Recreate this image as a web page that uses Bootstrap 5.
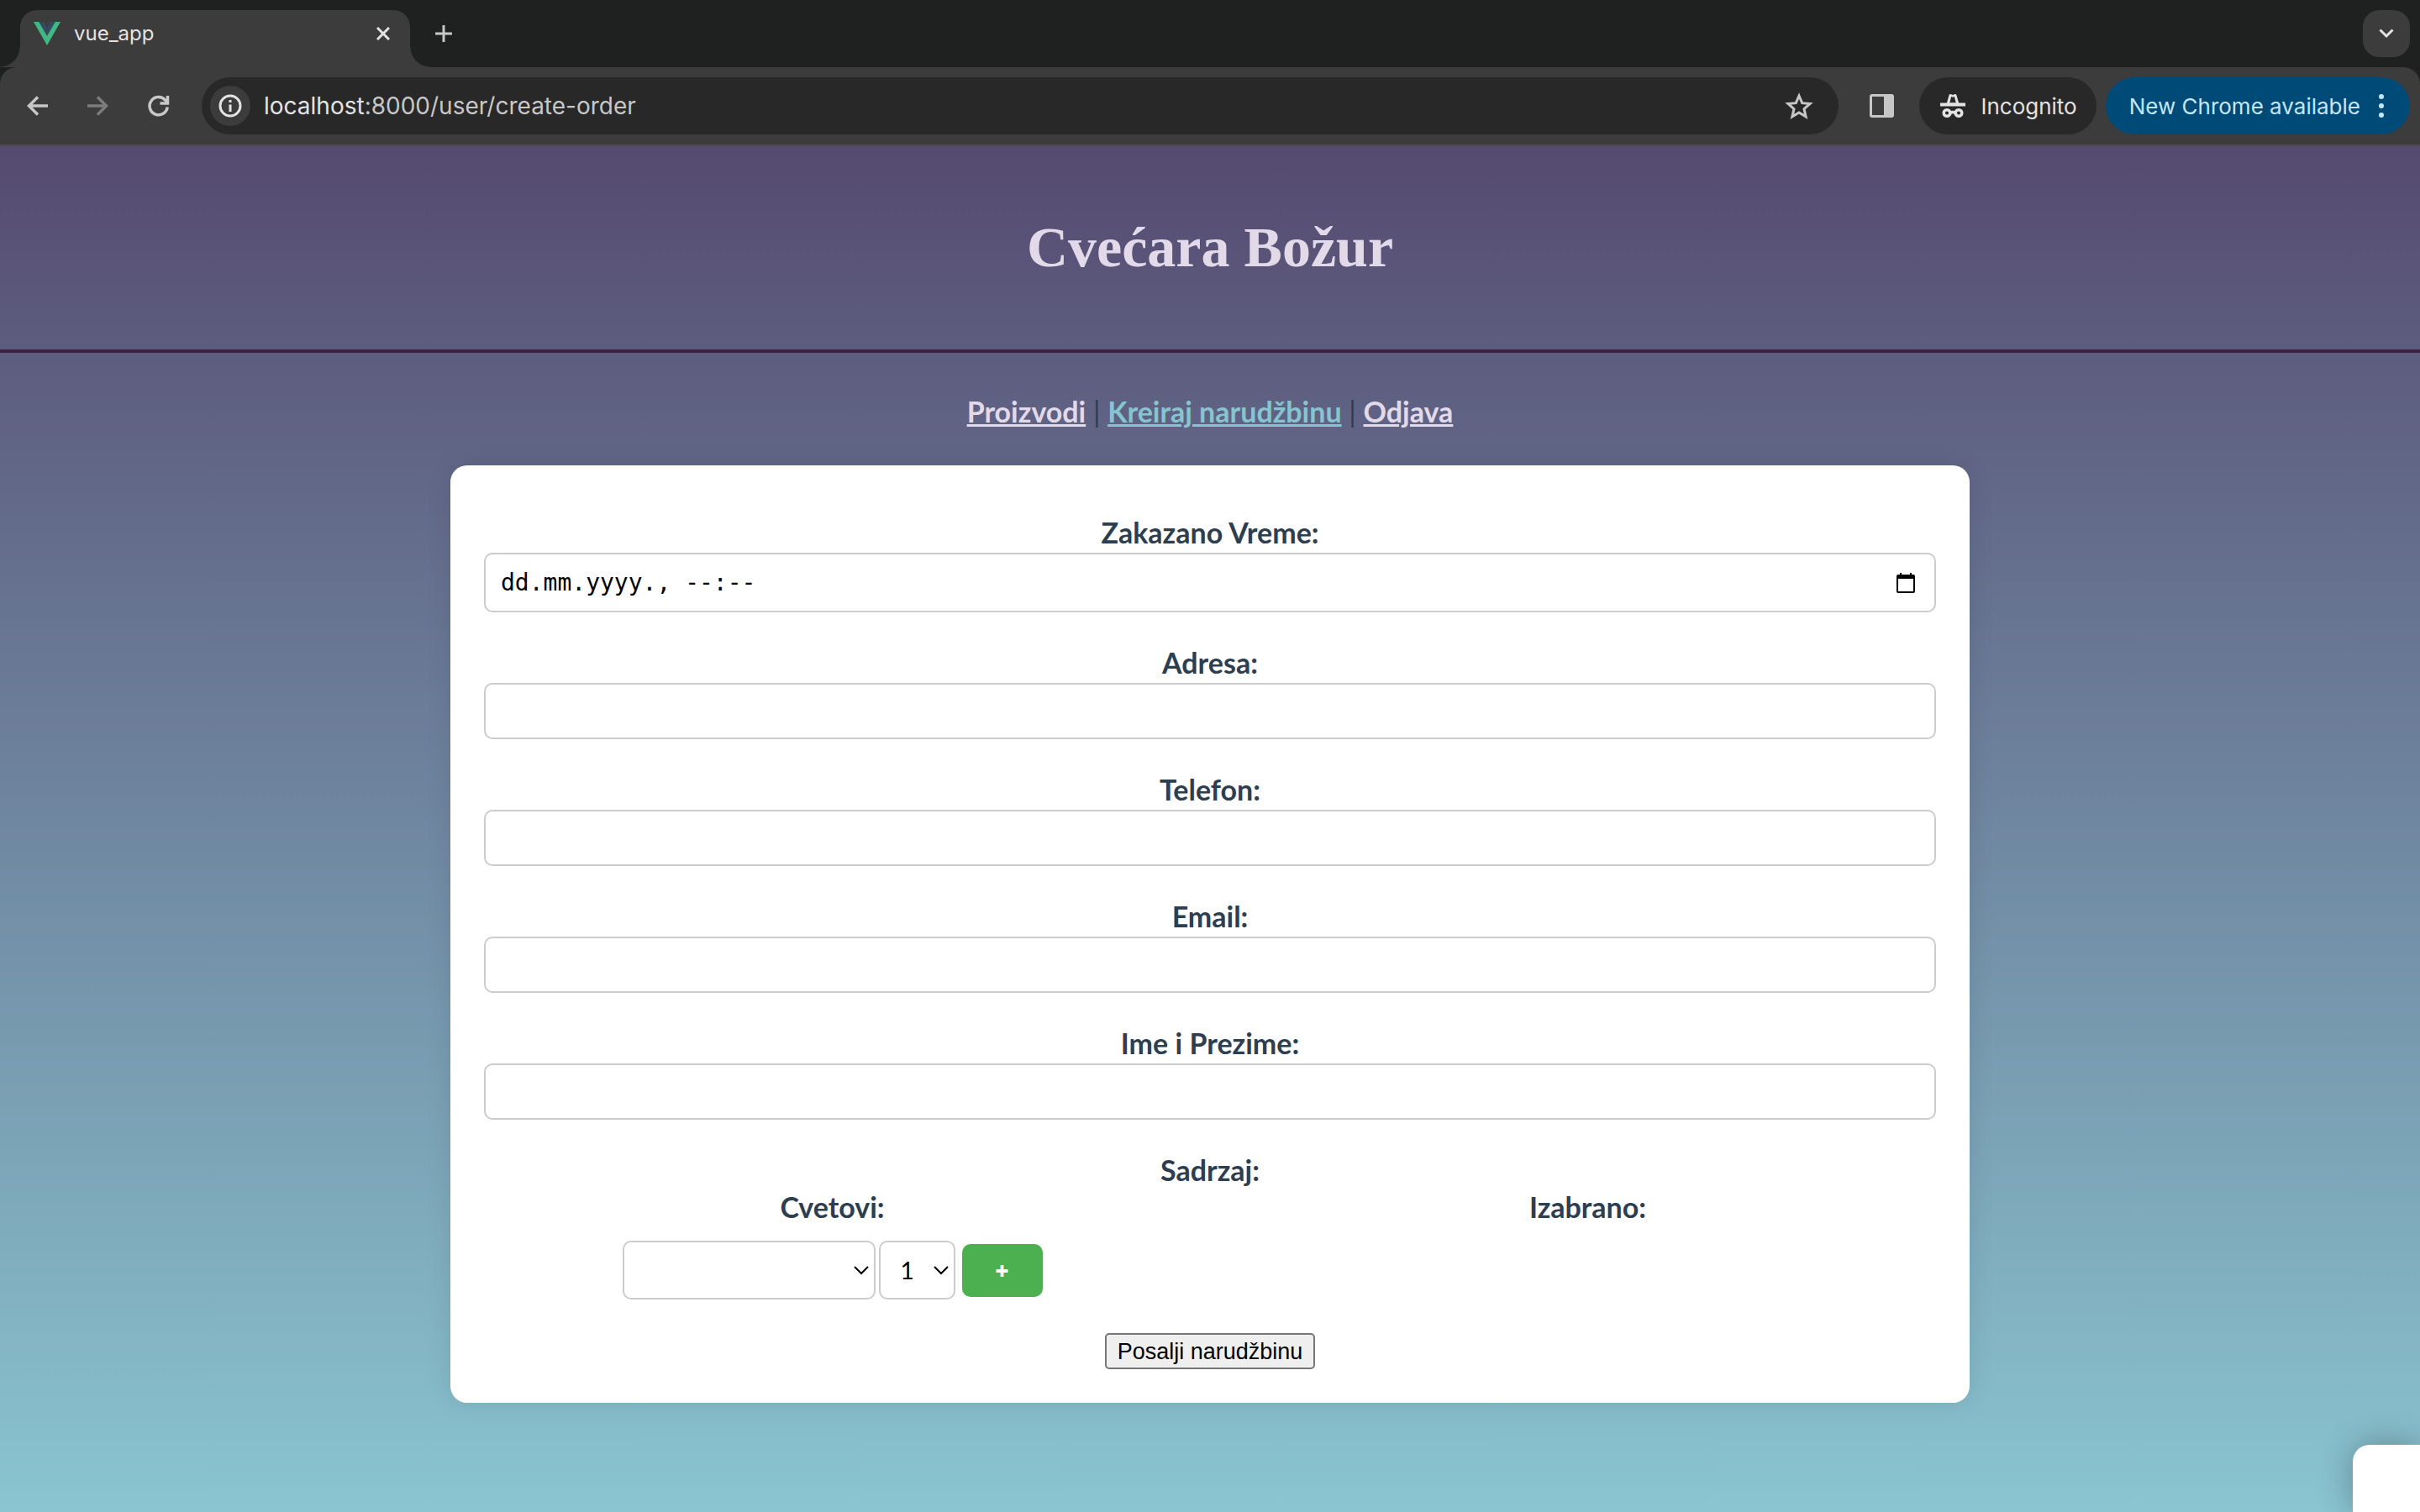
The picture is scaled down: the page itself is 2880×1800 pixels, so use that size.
<!DOCTYPE html>
<html lang="sr-Latn">
<head>
<meta charset="utf-8">
<meta name="viewport" content="width=device-width, initial-scale=1">
<title>vue_app</title>
<link href="https://cdn.jsdelivr.net/npm/bootstrap@5.3.0/dist/css/bootstrap.min.css" rel="stylesheet">
<style>
  body { background: #1f2120; font-family: Lato, "Open Sans", sans-serif; }
  button { border: 0; background: none; padding: 0; color: inherit; }
  svg { display: block; flex: none; }

  /* browser frame */
  .chrome-ui { font-family: Inter, Roboto, sans-serif; color: #e3e3e3; }
  .tab-strip { height: 80px; padding: 12px 12px 0 24px; }
  .tab-item { position: relative; width: 464px; height: 68px; padding: 0 24px 12px 16px; gap: 16px; background: #3c3c3c; border-radius: 20px 20px 0 0; font-size: 24px; }
  .tab-item::before, .tab-item::after { content: ""; position: absolute; bottom: 0; width: 24px; height: 24px; }
  .tab-item::before { right: 100%; background: radial-gradient(circle at 0 0, transparent 23px, #3c3c3c 24px); }
  .tab-item::after { left: 100%; background: radial-gradient(circle at 100% 0, transparent 23px, #3c3c3c 24px); }
  .new-tab { margin: 0 0 12px 30px; color: #c7c7c7; }
  .tab-menu { width: 56px; height: 56px; border-radius: 20px; background: #3c3c3c; }
  .tool-bar { height: 94px; padding: 12px 12px 12px 32px; background: #3c3c3c; border-bottom: 2px solid #4a4a4a; border-radius: 20px 20px 0 0; color: #c7c7c7; }
  .nav-icons { gap: 46px; margin-right: 38px; }
  .address { height: 68px; border-radius: 34px; background: #282828; padding: 0 30px 0 10px; }
  .site-info { width: 48px; height: 48px; border-radius: 24px; background: #3c3c3c; color: #e3e3e3; }
  .address-text { font-size: 28px; margin-left: 16px; color: #c7c7c7; }
  .address-text span { color: #e3e3e3; }
  .side-panel { margin: 0 30px 0 37px; }
  .pill { height: 68px; border-radius: 34px; font-size: 26px; white-space: nowrap; }
  .pill-incognito { padding: 0 23px 0 25px; gap: 18px; background: #282828; color: #e3e3e3; margin-right: 11px; }
  .pill-update { padding: 0 31px 0 28px; gap: 22px; background: #004a77; color: #c2e7ff; }

  /* shop page */
  .shop { position: relative; overflow: hidden; background: linear-gradient(#554a70, #8ac5d1); color: #2c3e50; font-size: 34px; line-height: 44px; text-align: center; }
  .shop-header { border-bottom: 4px solid #3a2340; padding: 72px 0 74px; }
  .shop-title { margin: 0; font-family: "Liberation Serif", serif; font-weight: 700; font-size: 68px; line-height: 96px; color: #e2d9e9; }
  .shop-nav { padding: 48px 0 42px; }
  .shop-nav a { color: #e2d9e9; font-weight: 700; text-decoration-thickness: 3px; }
  .shop-nav a.current { color: #86c5d0; }
  .order-card { width: 100%; max-width: 1808px; margin: 0 auto; padding: 58px 40px 40px; background: #fff; border-radius: 20px; box-shadow: 0 0 30px rgba(0,0,0,.1); }
  .order-card label, .group-title { display: block; font-weight: 700; }
  .field { margin-bottom: 38px; }
  .field label { margin-bottom: 2px; }
  .box { border: 2px solid #ccc; border-radius: 10px; background-color: #fff; color: #000; }
  .field .box { display: flex; align-items: center; width: 100%; height: 67px; padding: 0 18px; }
  .field .box.date-box { height: 71px; padding-right: 23px; }
  .date-box input { flex: 1; border: 0; outline: 0; padding: 0; font-family: "DejaVu Sans Mono", monospace; font-size: 28px; line-height: 40px; color: #000; }
  .pickers { display: grid; grid-template-columns: 1fr 1fr; gap: 70px; margin-bottom: 40px; }
  .picker-row { margin-top: 18px; }
  .picker-row select { appearance: none; height: 70px; padding: 0 24px; font-family: Lato, sans-serif; font-size: 28px; }
  .select-wrap { position: relative; }
  .select-wrap svg { position: absolute; right: 8px; top: 30px; pointer-events: none; }
  .flower { width: 301px; }
  .amount { width: 91px; }
  .add-btn { width: 96px; height: 63px; margin-left: 4px; border-radius: 10px; background: #4caf50; color: #fff; font-family: "Open Sans", sans-serif; font-weight: 800; font-size: 28px; line-height: 40px; }
  .send-btn { height: 43px; padding: 0 13px; border: 2px solid #767676; border-radius: 5px; background: #efefef; color: #000; font-family: "Liberation Sans", sans-serif; font-size: 27px; line-height: 36px; }
  .corner-panel { position: absolute; right: 0; bottom: 0; width: 80px; height: 80px; background: #fff; border-radius: 20px 0 0 0; box-shadow: 0 0 40px rgba(0,0,0,.3); }
</style>
</head>
<body>
<div class="d-flex flex-column min-vh-100">
  <header class="chrome-ui">
    <div class="tab-strip d-flex align-items-start">
      <div class="tab-item d-flex align-items-center">
        <svg width="32" height="28" viewBox="0 0 32 28"><path fill="#41b883" d="M0 0h6.400L16 16.600 25.600 0H32L16 28z"/><path fill="#35495e" d="M6.400 0h5.900L16 6.400 19.700 0h5.900L16 16.600z"/></svg>
        <span class="flex-grow-1">vue_app</span>
        <button type="button" aria-label="Close tab"><svg width="16" height="16" viewBox="0 0 16 16" stroke="#e3e3e3" stroke-width="3"><path d="M1 1l14 14M15 1L1 15"/></svg></button>
      </div>
      <button type="button" class="new-tab align-self-center" aria-label="New tab"><svg width="20" height="20" viewBox="0 0 20 20" stroke="currentColor" stroke-width="3"><path d="M10 0v20M0 10h20"/></svg></button>
      <button type="button" class="tab-menu ms-auto d-flex align-items-center justify-content-center" aria-label="Search tabs"><svg width="18" height="12" viewBox="0 0 18 12" fill="none" stroke="#e3e3e3" stroke-width="3"><path d="M1.500 1.500L9 9l7.500-7.500"/></svg></button>
    </div>
    <div class="tool-bar d-flex align-items-center">
      <div class="nav-icons d-flex align-items-center">
        <button type="button" aria-label="Back"><svg width="26" height="24" viewBox="0 0 26 24" fill="none" stroke="currentColor" stroke-width="3.500"><path d="M25 12H3M13 1.500L2.500 12 13 22.500"/></svg></button>
        <button type="button" aria-label="Forward"><svg width="26" height="24" viewBox="0 0 26 24" fill="none" stroke="#7c7c7c" stroke-width="3.500"><path d="M0 12h22M12 1.500L22.500 12 12 22.500"/></svg></button>
        <button type="button" aria-label="Reload"><svg width="26" height="26" viewBox="0 0 26 26" fill="none" stroke="currentColor" stroke-width="3.500"><path d="M23.200 14.500A10.600 10.600 0 1 1 20.500 6L23 9M23.500 1v9H14.500"/></svg></button>
      </div>
      <div class="address d-flex align-items-center flex-grow-1">
        <button type="button" class="site-info d-flex align-items-center justify-content-center" aria-label="Site information"><svg width="28" height="28" viewBox="0 0 28 28" fill="none" stroke="currentColor" stroke-width="3"><circle cx="14" cy="14" r="12"/><path d="M14 12.500V21M14 7v3"/></svg></button>
        <div class="address-text flex-grow-1"><span>localhost</span>:8000/user/create-order</div>
        <button type="button" aria-label="Bookmark"><svg width="34" height="32" viewBox="0 0 34 32" fill="none" stroke="currentColor" stroke-width="3"><path d="M17 4l3.700 8.700 9.400.8-7.100 6.200 2.100 9.200L17 24l-8.100 4.900 2.100-9.200-7.100-6.200 9.400-.8z"/></svg></button>
      </div>
      <button type="button" class="side-panel" aria-label="Side panel"><svg width="29" height="28" viewBox="0 0 29 28"><rect x="1.500" y="1.500" width="26" height="25" rx="1.500" fill="none" stroke="currentColor" stroke-width="3"/><path fill="currentColor" d="M17 1h10v26H17z"/></svg></button>
      <button type="button" class="pill pill-incognito d-flex align-items-center">
        <svg width="30" height="30" viewBox="0 0 30 30"><path d="M7.500 13l3-10.500Q11 .5 13 1.200l2 .8 2-.8q2-.7 2.500 1.300l3 10.500z" fill="#e3e3e3"/><path d="M11.200 11.500l2-7.500 1.800.8 1.800-.8 2 7.500z" fill="#282828"/><path d="M0 11.500h30v4H0z" fill="#e3e3e3"/><g fill="none" stroke="#e3e3e3" stroke-width="3.500"><circle cx="8" cy="23.500" r="3.800"/><circle cx="22" cy="23.500" r="3.800"/><path d="M12 23.500q3-2 6 0"/></g></svg>
        Incognito</button>
      <button type="button" class="pill pill-update d-flex align-items-center">New Chrome available
        <svg width="6" height="28" viewBox="0 0 6 28" fill="currentColor"><circle cx="3" cy="3" r="3"/><circle cx="3" cy="14" r="3"/><circle cx="3" cy="25" r="3"/></svg></button>
    </div>
  </header>

  <main class="shop flex-grow-1">
    <header class="shop-header"><h1 class="shop-title">Cvećara Božur</h1></header>
    <nav class="shop-nav"><a href="#">Proizvodi</a> | <a href="#" class="current">Kreiraj narudžbinu</a> | <a href="#">Odjava</a></nav>

    <form class="order-card">
      <div class="field">
        <label for="time">Zakazano Vreme:</label>
        <div class="box date-box">
          <input id="time" type="text" value="dd.mm.yyyy., --:--">
          <button type="button" aria-label="Kalendar"><svg width="22" height="24" viewBox="0 0 22 24"><path d="M4 0h2v2h10V0h2v2h2q2 0 2 2v18q0 2-2 2H2q-2 0-2-2V4q0-2 2-2h2zM2 7v15h18V7z"/></svg></button>
        </div>
      </div>
      <div class="field"><label for="address">Adresa:</label><input id="address" class="box" type="text"></div>
      <div class="field"><label for="phone">Telefon:</label><input id="phone" class="box" type="tel"></div>
      <div class="field"><label for="email">Email:</label><input id="email" class="box" type="email"></div>
      <div class="field"><label for="name">Ime i Prezime:</label><input id="name" class="box" type="text"></div>
      <div class="group-title">Sadrzaj:</div>
      <div class="pickers">
        <div>
          <label for="flower">Cvetovi:</label>
          <div class="picker-row d-flex align-items-center justify-content-center gap-1">
            <div class="select-wrap"><select id="flower" class="box flower d-block"><option></option></select><svg width="18" height="11" viewBox="0 0 18 11" fill="none" stroke="#000" stroke-width="2"><path d="M1 1l8 8 8-8"/></svg></div>
            <div class="select-wrap"><select class="box amount d-block" aria-label="Količina"><option>1</option></select><svg width="18" height="11" viewBox="0 0 18 11" fill="none" stroke="#000" stroke-width="2"><path d="M1 1l8 8 8-8"/></svg></div>
            <button type="button" class="add-btn">+</button>
          </div>
        </div>
        <div class="group-title">Izabrano:</div>
      </div>
      <button type="submit" class="send-btn d-block mx-auto">Posalji narudžbinu</button>
    </form>
    <div class="corner-panel"></div>
  </main>
</div>
<script src="https://cdn.jsdelivr.net/npm/bootstrap@5.3.0/dist/js/bootstrap.bundle.min.js"></script>
</body>
</html>
